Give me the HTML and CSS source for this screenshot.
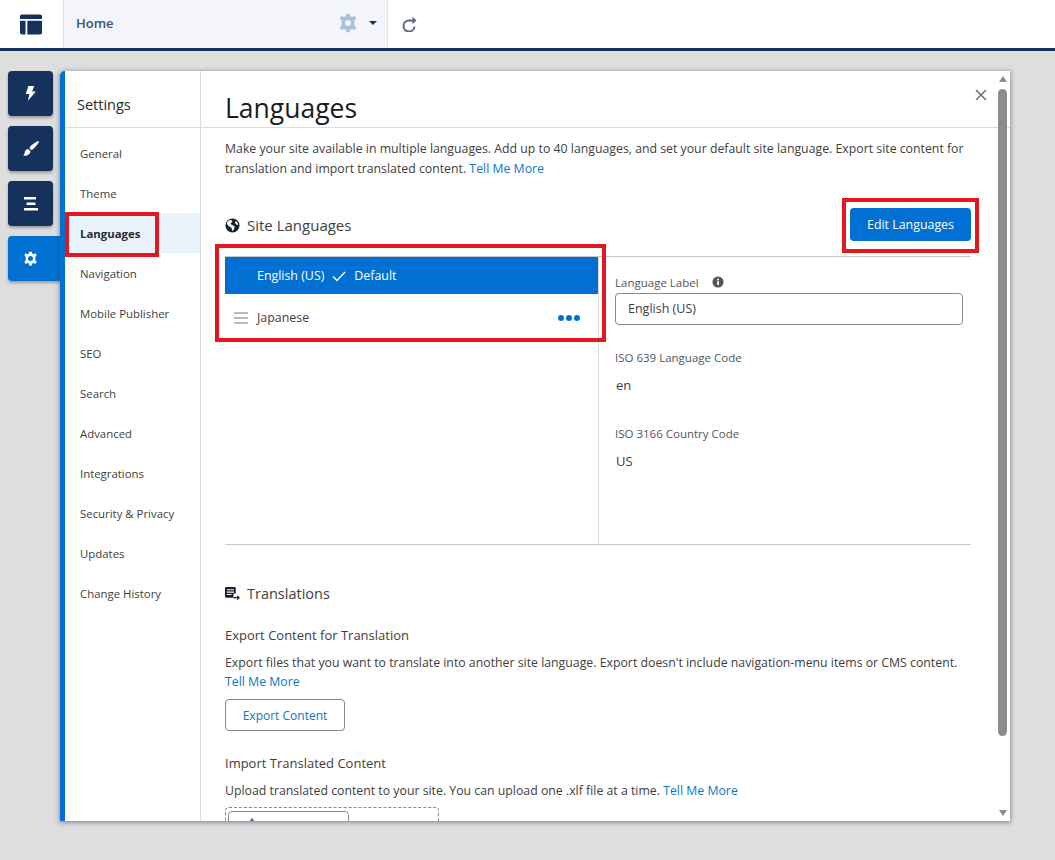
FILE: index.html
```html
<!DOCTYPE html>
<html lang="en">
<head>
<meta charset="utf-8">
<title>Languages</title>
<link rel="stylesheet" href="styles.css">
</head>
<body>
<header class="topbar">
  <div class="logo-cell">
    <svg class="logo" viewBox="0 0 24 22" width="22" height="21"><path d="M2 0h20a2 2 0 0 1 2 2v3H0V2a2 2 0 0 1 2-2zM0 7h6v15H2a2 2 0 0 1-2-2zM8 7h16v13a2 2 0 0 1-2 2H8z"/></svg>
  </div>
  <div class="page-cell">
    <span class="page-name">Home</span>
    <svg class="gear-light" viewBox="0 0 24 24" width="20" height="20"><path d="M10 1h4l.8 3 2.400 1 2.700-1.600 2 3.500L19.700 9v6l2.200 2.100-2 3.500-2.700-1.600-2.400 1-.8 3h-4l-.8-3-2.400-1-2.700 1.600-2-3.500L4.300 15V9L2.100 6.900l2-3.500L6.800 5 9.200 4z"/><circle cx="12" cy="12" r="3.500" fill="#f3f5fa"/></svg>
    <span class="caret"></span>
  </div>
  <div class="refresh-cell">
    <svg viewBox="0 0 16 16" width="16" height="16" class="refresh"><path d="M13.500 10.500A5.500 5.500 0 1 1 8 4.500H12" fill="none" stroke-width="2"/><path d="M11.500 .8L15.500 4.500 11.500 8.200z" stroke="none"/></svg>
  </div>
</header>

<div class="workspace">
  <nav class="rail">
    <div class="tile">
      <svg viewBox="0 0 16 16" width="17" height="17"><path d="M6 1h5.500L9.500 6H13L5.500 15l1.500-6.500H3.500z"/></svg>
    </div>
    <div class="tile">
      <svg viewBox="0 0 16 16" width="18" height="18"><path d="M15 1c.5 1-4 6.500-6.500 8L6.500 7C8 4.500 14 .5 15 1zM5.500 8l2 2c0 2.500-3 4.500-6.500 4 1.500-1 1-2 1.500-3.500C3 9 4.500 8 5.500 8z"/></svg>
    </div>
    <div class="tile">
      <svg viewBox="0 0 16 16" width="16" height="16"><rect x="1" y="1" width="12" height="2.500" rx=".5"/><rect x="3.500" y="6.500" width="9" height="2.500" rx=".5"/><rect x="1" y="12" width="14" height="2.500" rx=".5"/></svg>
    </div>
    <div class="tile tile-active">
      <svg viewBox="0 0 24 24" width="15" height="15"><path d="M10 1h4l.8 3 2.400 1 2.700-1.600 2 3.500L19.700 9v6l2.200 2.100-2 3.500-2.700-1.600-2.400 1-.8 3h-4l-.8-3-2.400-1-2.700 1.600-2-3.500L4.300 15V9L2.100 6.900l2-3.500L6.800 5 9.200 4z"/><circle cx="12" cy="12" r="4" fill="#0070d2"/></svg>
    </div>
  </nav>

  <section class="panel">
    <aside class="sidebar">
      <div class="sidebar-title">Settings</div>
      <ul class="sidebar-list">
        <li>General</li>
        <li>Theme</li>
        <li class="is-active">Languages</li>
        <li>Navigation</li>
        <li>Mobile Publisher</li>
        <li>SEO</li>
        <li>Search</li>
        <li>Advanced</li>
        <li>Integrations</li>
        <li>Security &amp; Privacy</li>
        <li>Updates</li>
        <li>Change History</li>
      </ul>
    </aside>

    <main class="main">
      <div class="main-head">
        <h1>Languages</h1>
        <svg class="close" viewBox="0 0 12 12" width="12" height="12"><path d="M1 1l10 10M11 1L1 11"/></svg>
      </div>
      <div class="main-body">
        <p class="intro">Make your site available in multiple languages. Add up to 40 languages, and set your default site language. Export site content for translation and import translated content. <a>Tell Me More</a></p>

        <div class="section-head">
          <h2 class="site-title">
            <svg viewBox="0 0 16 16" width="15" height="15" class="sec-icon"><path fill-rule="evenodd" d="M8 .5a7.500 7.500 0 1 0 0 15 7.500 7.500 0 0 0 0-15zM3 3.500c1.500-1 3-1.500 4-1.200l1 1.700-2 1.500.5 1.500L9 8l1.500 1.500L9 13l-1.500.8L7 10.500 4.500 9 2 6.500C2 5.500 2.300 4.500 3 3.500zM10.500 2.700C12.500 3.500 14 5.500 14 7.500l-2-.5-1.500-1.500L11.500 4z"/></svg>
            Site Languages
          </h2>
          <button class="btn-primary">Edit Languages</button>
        </div>

        <div class="lang-split">
          <div class="lang-list">
            <div class="lang-row lang-default">
              <span>English (US)</span>
              <svg viewBox="0 0 14 14" width="14" height="14" class="check"><path d="M1 7.500l4 4L13 3"/></svg>
              <span>Default</span>
            </div>
            <div class="lang-row lang-other">
              <span class="grip"><i></i><i></i><i></i></span>
              <span class="lang-name">Japanese</span>
              <span class="dots"><i></i><i></i><i></i></span>
            </div>
          </div>
          <div class="lang-detail">
            <div class="field-label">Language Label
              <svg viewBox="0 0 14 14" width="12" height="12" class="info"><circle cx="7" cy="7" r="6.500"/><rect x="6" y="6" width="2" height="4.500" fill="#fff"/><rect x="6" y="3.200" width="2" height="1.800" fill="#fff"/></svg>
            </div>
            <div class="input">English (US)</div>
            <div class="field-label iso-first">ISO 639 Language Code</div>
            <div class="field-value">en</div>
            <div class="field-label iso-second">ISO 3166 Country Code</div>
            <div class="field-value">US</div>
          </div>
        </div>

        <h2 class="translations">
          <svg viewBox="0 0 16 16" width="15" height="15" class="sec-icon"><path d="M1.500 1h8.500A1.500 1.500 0 0 1 11.500 2.500V8H9v4.500H1.500A1.500 1.500 0 0 1 0 11V2.500A1.500 1.500 0 0 1 1.500 1z"/><path d="M2 4h7.500M2 6.500h7.500M2 9h5" stroke="#fff" stroke-width="1.200" fill="none"/><path d="M9 12.500h6M13 10.500l2 2-2 2" stroke="#16202c" stroke-width="1.300" fill="none"/></svg>
          Translations
        </h2>
        <h3>Export Content for Translation</h3>
        <p class="copy">Export files that you want to translate into another site language. Export doesn't include navigation-menu items or CMS content. <a>Tell Me More</a></p>
        <button class="btn-outline">Export Content</button>
        <h3 class="import-title">Import Translated Content</h3>
        <p class="copy">Upload translated content to your site. You can upload one .xlf file at a time. <a>Tell Me More</a></p>
        <div class="dropzone">
          <button class="btn-upload">
            <svg viewBox="0 0 12 12" width="12" height="12" class="upload"><path d="M6 1L2 6h8z"/><rect x="5" y="5" width="2" height="6"/></svg>
          </button>
        </div>
      </div>
    </main>

    <div class="scrollbar">
      <span class="arrow-up"></span>
      <span class="thumb"></span>
      <span class="arrow-down"></span>
    </div>
  </section>
</div>

<div class="mark mark-nav"></div>
<div class="mark mark-list"></div>
<div class="mark mark-edit"></div>
</body>
</html>
```
FILE: styles.css
```css
* { box-sizing: border-box; }
html, body { margin: 0; height: 860px; overflow: hidden; }
body {
  position: relative;
  background: #dedede;
  font-family: "Open Sans", "Noto Sans", sans-serif;
  font-size: 12px;
  color: #2b2b2b;
}
a { color: #0b76c9; }
button { font-family: inherit; }

.topbar {
  display: flex;
  height: 51px;
  background: #fff;
  border-bottom: 3px solid #16325c;
}
.logo-cell {
  width: 63px;
  display: flex;
  align-items: center;
  justify-content: center;
  padding-right: 1px;
}
.logo { fill: #16325c; }
.page-cell {
  width: 325px;
  display: flex;
  align-items: center;
  background: #f3f5fa;
  border-left: 1px solid #dfe3ea;
  border-right: 1px solid #dfe3ea;
  padding: 0 10px 2px 12px;
}
.page-name { flex: 1; font-size: 13px; font-weight: 600; color: #3b5378; }
.gear-light { fill: #a9c0dc; margin-right: 11px; }
.caret {
  width: 0;
  height: 0;
  border: 4px solid transparent;
  border-top: 4px solid #16325c;
  border-bottom: 0;
}
.refresh-cell { display: flex; align-items: center; padding-left: 13px; }
.refresh { stroke: #54698d; fill: #54698d; }

.workspace { display: flex; padding: 20px 45px 0 8px; }
.rail {
  width: 52px;
  display: flex;
  flex-direction: column;
  gap: 10px;
}
.tile {
  width: 45px;
  height: 45px;
  display: flex;
  align-items: center;
  justify-content: center;
  background: #16325c;
  border-radius: 4px;
  box-shadow: 0 2px 3px rgba(0,0,0,.3);
}
.tile svg { fill: #fff; }
.tile-active {
  width: 52px;
  background: #0070d2;
  border-radius: 4px 0 0 4px;
  padding-right: 7px;
}

.panel {
  position: relative;
  display: flex;
  width: 950px;
  height: 750px;
  background: #fff;
  border-left: 5px solid #0070d2;
  border-top-left-radius: 5px;
  box-shadow: 0 1px 4px 1px rgba(60,75,95,.5);
  overflow: hidden;
}
.sidebar { width: 136px; flex: none; border-right: 1px solid #dddbda; }
.sidebar-title {
  height: 57px;
  padding: 24px 0 0 12px;
  font-size: 14.500px;
  line-height: 20px;
  border-bottom: 1px solid #dddbda;
}
.sidebar-list { list-style: none; margin: 5px 0 0; padding: 0; }
.sidebar-list li {
  height: 40px;
  padding: 1px 0 0 15px;
  line-height: 40px;
  font-size: 11.400px;
  color: #3e3e3c;
}
.sidebar-list .is-active { background: #e8f3fc; font-weight: 700; color: #2b2b2b; }

.main { flex: 1; min-width: 0; }
.main-head {
  display: flex;
  justify-content: space-between;
  height: 57px;
  border-bottom: 1px solid #dddbda;
  padding: 16px 23px 0 24px;
}
h1 { margin: 0; font-size: 26.500px; line-height: 42px; font-weight: 400; color: #1b1b1b; }
.close { margin-top: 2px; fill: none; stroke: #706e6b; stroke-width: 1.500; }
.main-body { padding: 0 39px 0 24px; }
.intro, .copy { margin: 0; font-size: 12.300px; line-height: 20px; color: #3e3e3c; }
.intro { padding-top: 11px; }

.section-head {
  display: flex;
  justify-content: space-between;
  align-items: center;
  height: 33px;
  margin-top: 29px;
}
h2 {
  display: flex;
  align-items: center;
  gap: 7px;
  margin: 0;
  font-size: 14.500px;
  font-weight: 400;
  color: #3e3e3c;
}
.site-title { font-size: 15px; padding-top: 1px; }
.sec-icon { fill: #16202c; }
.btn-primary {
  width: 121px;
  height: 33px;
  border: 0;
  padding: 0;
  border-radius: 4px;
  background: #0070d2;
  color: #fff;
  font-size: 12.400px;
}

.lang-split {
  display: flex;
  height: 289px;
  margin-top: 15px;
  border-top: 1px solid #c9c9c9;
  border-bottom: 1px solid #c9c9c9;
}
.lang-list { width: 374px; border-right: 1px solid #dddbda; }
.lang-row { display: flex; align-items: center; font-size: 12.400px; }
.lang-default {
  height: 37px;
  gap: 8px;
  padding-left: 32px;
  background: #0070d2;
  color: #fff;
}
.check { fill: none; stroke: #fff; stroke-width: 1.500; }
.lang-other { height: 47px; padding: 0 18px 0 9px; color: #3e3e3c; }
.lang-name { flex: 1; margin-left: 9px; }
.grip { display: flex; flex-direction: column; gap: 3px; }
.grip i { display: block; width: 14px; height: 2px; background: #b0bccb; }
.dots { display: flex; gap: 2px; }
.dots i { display: block; width: 6px; height: 6px; border-radius: 50%; background: #0070d2; }

.lang-detail { flex: 1; padding: 17px 8px 0 16px; }
.field-label {
  display: flex;
  align-items: center;
  gap: 13px;
  height: 16px;
  font-size: 11.500px;
  color: #54545a;
}
.info { fill: #54545a; }
.input {
  height: 32px;
  margin-top: 3px;
  padding-left: 12px;
  border: 1px solid #8a8a8a;
  border-radius: 4px;
  line-height: 30px;
  font-size: 12.500px;
  color: #3e3e3c;
}
.iso-first { margin-top: 24px; }
.iso-second { margin-top: 31px; }
.field-value { margin-top: 12px; padding-left: 1px; font-size: 13px; line-height: 17px; color: #3e3e3c; }

.translations { margin-top: 38px; height: 20px; }
h3 { margin: 22px 0 0; font-size: 13px; line-height: 20px; font-weight: 400; color: #3e3e3c; }
h3 + .copy { margin-top: 8px; line-height: 19px; }
.btn-outline {
  display: block;
  width: 120px;
  height: 32px;
  margin-top: 8px;
  padding: 0;
  border: 1px solid #8a8a8a;
  border-radius: 4px;
  background: #fff;
  color: #0b76c9;
  font-size: 12px;
}
.import-title { margin-top: 22px; }
.dropzone {
  width: 214px;
  height: 44px;
  margin-top: 7px;
  padding: 3px 0 0 2px;
  border: 1px dashed #8a8a8a;
  border-radius: 4px;
}
.btn-upload {
  display: flex;
  width: 121px;
  height: 32px;
  padding: 5px 0 0 17px;
  border: 1px solid #8a8a8a;
  border-radius: 4px;
  background: #fff;
}
.upload { fill: #54698d; }

.scrollbar {
  position: absolute;
  top: 0;
  right: 3px;
  bottom: 0;
  width: 9px;
  display: flex;
  flex-direction: column;
  align-items: center;
}
.arrow-up {
  margin-top: 5px;
  border: 4.500px solid transparent;
  border-bottom: 6px solid #8c8c8c;
  border-top: 0;
}
.thumb {
  width: 9px;
  height: 647px;
  margin-top: 7px;
  border-radius: 5px;
  background: #8c8c8c;
}
.arrow-down {
  margin-top: 74px;
  border: 4.500px solid transparent;
  border-top: 6px solid #8c8c8c;
  border-bottom: 0;
}

.mark { position: absolute; border: 4px solid #e3171f; pointer-events: none; }
.mark-nav { left: 65px; top: 212px; width: 94px; height: 45px; }
.mark-list { left: 215px; top: 244px; width: 391px; height: 98px; }
.mark-edit { left: 842px; top: 198px; width: 137px; height: 55px; }
```
